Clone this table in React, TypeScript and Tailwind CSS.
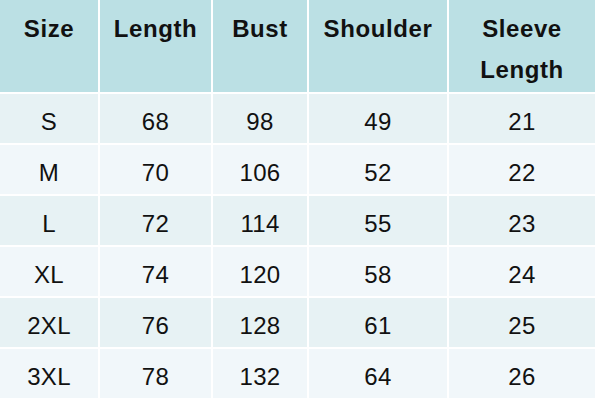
import React from "react";

const headers: string[][] = [["Size"], ["Length"], ["Bust"], ["Shoulder"], ["Sleeve", "Length"]];
const rows = [
  ["S", "68", "98", "49", "21"],
  ["M", "70", "106", "52", "22"],
  ["L", "72", "114", "55", "23"],
  ["XL", "74", "120", "58", "24"],
  ["2XL", "76", "128", "61", "25"],
  ["3XL", "78", "132", "64", "26"],
];

export default function App() {
  return (
    <div
      className="w-[595px] h-[400px] overflow-hidden bg-white text-[#111]"
      style={{ fontFamily: '"Liberation Sans", Arial, sans-serif' }}
    >
      <div className="grid grid-cols-[98px_111px_94px_138px_146px] gap-x-[2px] gap-y-[2px]">
        {headers.map((h, i) => (
          <div
            key={"h" + i}
            className="h-[92px] bg-[#bbe0e4] pt-[8px] text-center text-[24px] font-bold leading-[41px] tracking-[0.6px]"
          >
            {h.map((l, j) => (
              <div key={j}>{l}</div>
            ))}
          </div>
        ))}
        {rows.map((r, ri) =>
          r.map((c, ci) => (
            <div
              key={ri + "-" + ci}
              className={
                "h-[49px] flex items-center justify-center pt-[6px] text-[24px] leading-none tracking-[0.3px] " +
                (ri % 2 === 0 ? "bg-[#e7f2f4]" : "bg-[#f1f7fa]")
              }
            >
              {c}
            </div>
          ))
        )}
      </div>
    </div>
  );
}
